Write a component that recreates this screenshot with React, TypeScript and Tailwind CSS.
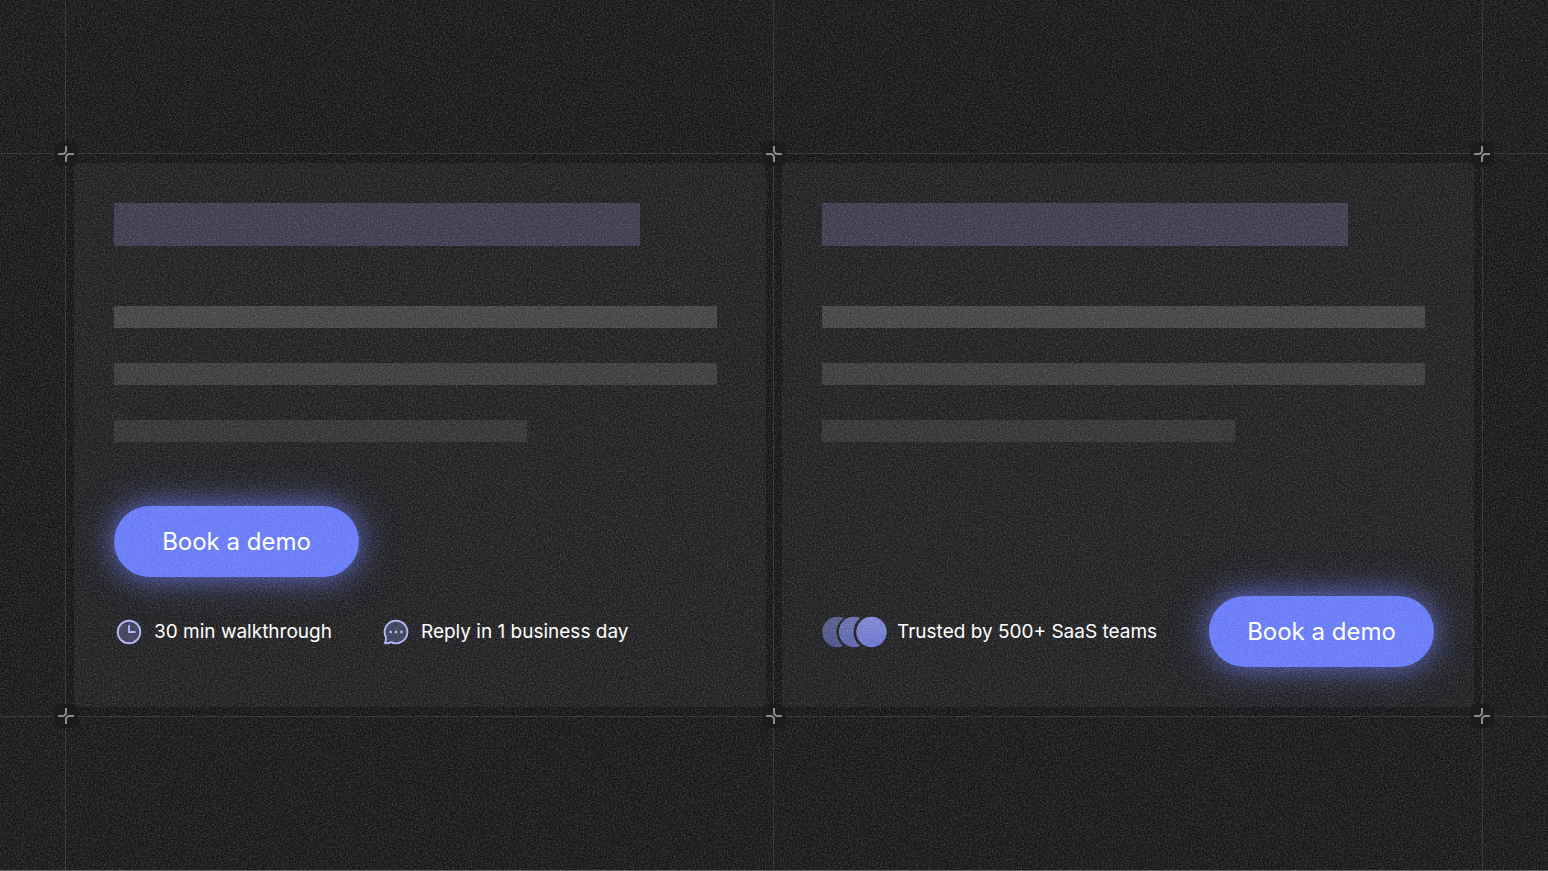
import type { ReactNode } from "react";

type Turn = "left" | "right";

function Cross({ turn, className }: { turn: Turn; className: string }) {
  return (
    <span
      aria-hidden="true"
      className={`absolute z-30 flex size-6 items-center justify-center rounded-md bg-[#1c1c1e] ${className}`}
    >
      <svg
        viewBox="0 0 16 16"
        fill="none"
        stroke="#8a8a8c"
        strokeWidth="2"
        className={turn === "right" ? "size-4 -scale-x-100" : "size-4"}
      >
        <path d="M0 8H5.2Q7.4 7.4 8 5.2V0" />
        <path d="M16 8H10.8Q8.6 8.6 8 10.8V16" />
      </svg>
    </span>
  );
}

function Grain() {
  return (
    <svg aria-hidden="true" className="pointer-events-none fixed inset-0 z-20 h-full w-full">
      <filter id="grain" x="0" y="0" width="100%" height="100%" colorInterpolationFilters="sRGB">
        <feTurbulence type="fractalNoise" baseFrequency="0.66" numOctaves="3" seed="4" />
        <feColorMatrix values="0 0 0 0 0.96  0 0 0 0 0.96  0 0 0 0 1  0.35 0 0 0 -0.12" />
      </filter>
      <rect width="100%" height="100%" filter="url(#grain)" />
    </svg>
  );
}

function ClockIcon() {
  return (
    <svg aria-hidden="true" viewBox="0 0 26 26" fill="none" className="size-[26px] shrink-0">
      <circle cx="13" cy="13" r="11.3" fill="#3d4059" stroke="#adb4f5" strokeWidth="1.9" />
      <path d="M13 6.2V13H19.6" stroke="#adb4f5" strokeWidth="1.9" />
    </svg>
  );
}

function ChatIcon() {
  return (
    <svg aria-hidden="true" viewBox="0 0 26 26" fill="none" className="size-[26px] shrink-0">
      <path
        d="M13 1.7A11.3 11.3 0 1 1 8 23.1C6.3 24.2 4 24.5 1.8 24.1C2.8 22.6 3.4 20.9 2.8 18A11.3 11.3 0 0 1 13 1.7Z"
        fill="#3d4059"
        stroke="#adb4f5"
        strokeWidth="1.9"
        strokeLinejoin="round"
      />
      <path d="M6.4 11.8h2.4v2.4H6.4zM11.8 11.8h2.4v2.4h-2.4zM17.2 11.8h2.4v2.4h-2.4z" fill="#adb4f5" />
    </svg>
  );
}

function AvatarStack() {
  return (
    <svg aria-hidden="true" viewBox="0 0 65 32" className="h-8 w-[65px] shrink-0">
      <defs>
        <linearGradient id="avatar" x1="0" y1="0" x2="0" y2="1">
          <stop offset="0" stopColor="#7d87cf" />
          <stop offset="1" stopColor="#6873ce" />
        </linearGradient>
        <mask id="cut-first">
          <rect width="65" height="32" fill="white" />
          <circle cx="32" cy="16" r="17.5" fill="black" />
        </mask>
        <mask id="cut-second">
          <rect width="65" height="32" fill="white" />
          <circle cx="49.5" cy="16" r="18" fill="black" />
        </mask>
      </defs>
      <circle cx="15.5" cy="16" r="15.2" fill="url(#avatar)" opacity="0.6" mask="url(#cut-first)" />
      <circle cx="32" cy="16" r="15.2" fill="url(#avatar)" opacity="0.8" mask="url(#cut-second)" />
      <circle cx="49.5" cy="16" r="15.2" fill="url(#avatar)" />
    </svg>
  );
}

function DemoButton({ className }: { className: string }) {
  return (
    <button
      type="button"
      className={`h-[71px] shrink-0 cursor-pointer whitespace-nowrap rounded-full bg-[#667af8] text-2xl leading-8 text-white shadow-[0_0_40px_rgba(107,124,250,0.4),0_0_26px_rgba(107,124,250,0.55)] ${className}`}
    >
      Book a demo
    </button>
  );
}

function Note({ icon, children }: { icon: ReactNode; children: ReactNode }) {
  return (
    <div className="flex items-center gap-3">
      {icon}
      <span className="whitespace-nowrap text-[19px] leading-6 text-white">{children}</span>
    </div>
  );
}

function Card({ children }: { children: ReactNode }) {
  return (
    <article className="flex min-h-[544px] flex-col bg-[#1f1f21] p-10">
      <div className="h-[43px] w-[86%] bg-[#3c3a4d]" />
      <div className="mt-[60px] flex flex-col gap-[35px]">
        <div className="h-[22px] w-[98.5%] bg-[#424243]" />
        <div className="h-[22px] w-[98.5%] bg-[#3a3a3b]" />
        <div className="h-[22px] w-[67.5%] bg-[#323233]" />
      </div>
      {children}
    </article>
  );
}

export default function App() {
  return (
    <main className="flex min-h-screen flex-col border-b border-[#5c585a] bg-[#161618] font-['Inter',sans-serif]">
      <div className="mx-[65px] grid h-[153px] grid-cols-2 border-x border-[#303032]">
        <div className="border-r border-[#303032]" />
      </div>

      <section className="border-y border-[#303032] px-[65px]">
        <div className="relative grid grid-cols-2 border-x border-[#303032] bg-[#131315]">
          <div className="border-r border-[#303032] py-[9px] pr-[7px] pl-2">
            <Card>
              <DemoButton className="mt-16 w-[245px] self-start" />
              <div className="mt-[42px] ml-[2px] flex flex-wrap gap-x-[51px] gap-y-4">
                <Note icon={<ClockIcon />}>30 min walkthrough</Note>
                <Note icon={<ChatIcon />}>Reply in 1 business day</Note>
              </div>
            </Card>
          </div>
          <div className="px-2 py-[9px]">
            <Card>
              <div className="mt-auto flex items-center justify-between gap-4">
                <div className="flex items-center gap-[10px]">
                  <AvatarStack />
                  <span className="whitespace-nowrap text-[19px] leading-6 text-white">
                    Trusted by 500+ SaaS teams
                  </span>
                </div>
                <DemoButton className="w-[225px]" />
              </div>
            </Card>
          </div>

          <Cross turn="left" className="-top-3 -left-3" />
          <Cross turn="right" className="-top-3 left-1/2 -translate-x-1/2" />
          <Cross turn="left" className="-top-3 -right-3" />
          <Cross turn="left" className="-bottom-3 -left-3" />
          <Cross turn="right" className="-bottom-3 left-1/2 -translate-x-1/2" />
          <Cross turn="left" className="-right-3 -bottom-3" />
        </div>
      </section>

      <div className="mx-[65px] grid flex-1 grid-cols-2 border-x border-[#303032]">
        <div className="border-r border-[#303032]" />
      </div>
      <Grain />
    </main>
  );
}
